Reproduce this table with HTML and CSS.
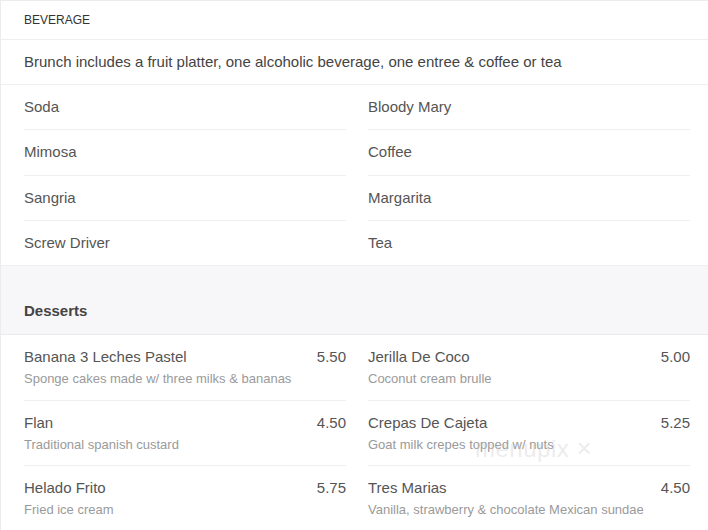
FILE: index.html
```html
<!DOCTYPE html>
<html>
<head>
<meta charset="utf-8">
<link rel="stylesheet" href="styles.css">
</head>
<body>
<div class="page">
  <section class="card">
    <div class="cat">BEVERAGE</div>
    <div class="note">Brunch includes a fruit platter, one alcoholic beverage, one entree &amp; coffee or tea</div>
    <div class="grid">
      <div class="col">
        <div class="item">Soda</div>
        <div class="item">Mimosa</div>
        <div class="item">Sangria</div>
        <div class="item last">Screw Driver</div>
      </div>
      <div class="col">
        <div class="item">Bloody Mary</div>
        <div class="item">Coffee</div>
        <div class="item">Margarita</div>
        <div class="item last">Tea</div>
      </div>
    </div>
  </section>
  <div class="section-head">Desserts</div>
  <section class="card desserts">
    <div class="grid">
      <div class="col">
        <div class="dish">
          <div class="dish-top"><span>Banana 3 Leches Pastel</span><span>5.50</span></div>
          <div class="desc">Sponge cakes made w/ three milks &amp; bananas</div>
        </div>
        <div class="dish">
          <div class="dish-top"><span>Flan</span><span>4.50</span></div>
          <div class="desc">Traditional spanish custard</div>
        </div>
        <div class="dish last">
          <div class="dish-top"><span>Helado Frito</span><span>5.75</span></div>
          <div class="desc">Fried ice cream</div>
        </div>
      </div>
      <div class="col">
        <div class="dish">
          <div class="dish-top"><span>Jerilla De Coco</span><span>5.00</span></div>
          <div class="desc">Coconut cream brulle</div>
        </div>
        <div class="dish">
          <div class="dish-top"><span>Crepas De Cajeta</span><span>5.25</span></div>
          <div class="desc">Goat milk crepes topped w/ nuts</div>
        </div>
        <div class="dish last">
          <div class="dish-top"><span>Tres Marias</span><span>4.50</span></div>
          <div class="desc">Vanilla, strawberry &amp; chocolate Mexican sundae</div>
        </div>
      </div>
    </div>
  </section>
  <div class="watermark">menupix <span class="x">×</span></div>
</div>
</body>
</html>
```

FILE: styles.css
```css
html, body {
  margin: 0;
  padding: 0;
  background: #ffffff;
}
body {
  font-family: "Liberation Sans", Arial, sans-serif;
  color: #555;
}
.page {
  position: relative;
  width: 708px;
  border-left: 1px solid #ececec;
  border-top: 1px solid #ececec;
  box-sizing: border-box;
}
.card {
  background: #fff;
}
.cat {
  font-size: 12px;
  color: #333;
  line-height: 14px;
  padding: 12px 23px 12px;
  border-bottom: 1px solid #eeeeee;
}
.note {
  font-size: 15px;
  color: #444;
  line-height: 20px;
  padding: 12px 23px 12px;
  border-bottom: 1px solid #eeeeee;
}
.grid {
  display: grid;
  grid-template-columns: 322px 322px;
  column-gap: 22px;
  padding: 0 18px 0 23px;
}
.item {
  font-size: 15px;
  line-height: 20px;
  padding: 12px 0 12.35px;
  border-bottom: 1px solid #efefef;
  color: #555;
}
.item.last {
  border-bottom: none;
  padding-bottom: 12px;
}
.section-head {
  background: #f7f7f9;
  border-top: 1px solid #eeeeee;
  border-bottom: 1px solid #eaeaec;
  font-size: 15px;
  font-weight: bold;
  color: #444;
  line-height: 20px;
  padding: 35px 23px 13px;
}
.dish {
  padding: 12px 0 11.5px;
  border-bottom: 1px solid #efefef;
}
.dish.last {
  border-bottom: none;
}
.dish-top {
  display: flex;
  justify-content: space-between;
  font-size: 15px;
  line-height: 20px;
  color: #555;
}
.desc {
  font-size: 13px;
  line-height: 18px;
  margin-top: 3px;
  color: #9a9a9a;
}
.watermark {
  position: absolute;
  left: 474px;
  top: 432px;
  font-size: 24px;
  color: rgba(200, 200, 200, 0.35);
  letter-spacing: 0.5px;
}
.watermark .x {
  font-size: 26px;
}
```
